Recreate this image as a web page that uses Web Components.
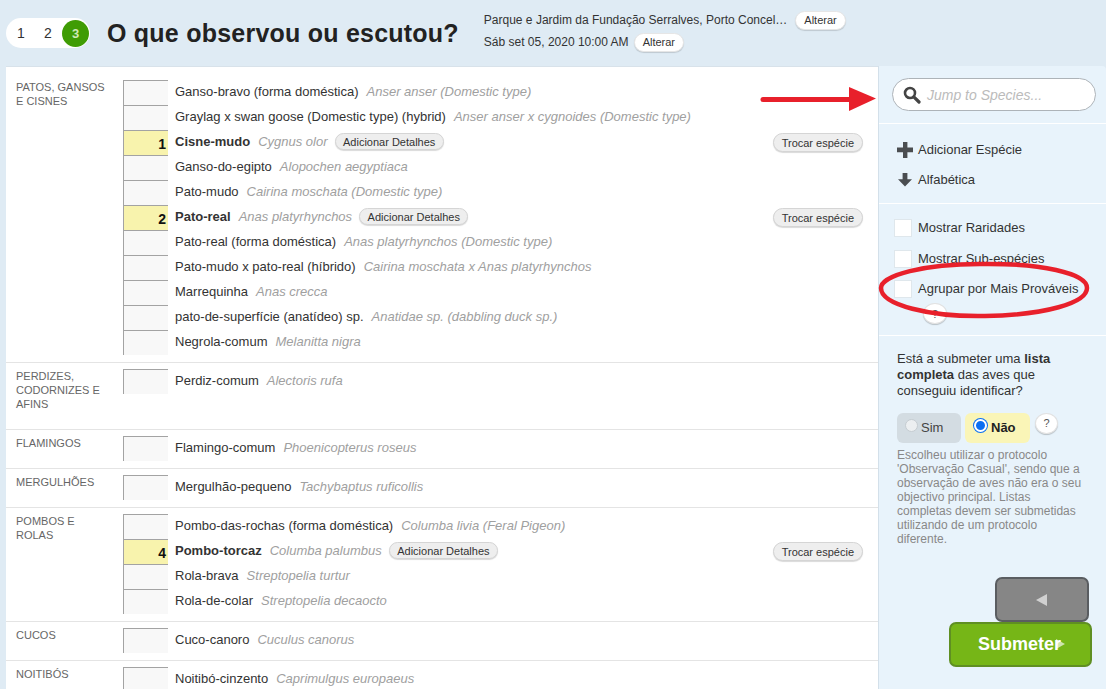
<!DOCTYPE html>
<html lang="pt">
<head>
<meta charset="utf-8">
<title>O que observou ou escutou?</title>
<style>
  html, body { margin: 0; height: 689px; overflow: hidden; }
  body { position: relative; background: #dfebf4; font-family: "Liberation Sans", Arial, sans-serif; color: #333; }
</style>
</head>
<body>
<checklist-page>
  <checklist-header slot="header"></checklist-header>
  <div slot="main">
    <species-group label="Patos, gansos e cisnes" first>
      <species-row name="Ganso-bravo (forma doméstica)" sci="Anser anser (Domestic type)"></species-row>
      <species-row name="Graylag x swan goose (Domestic type) (hybrid)" sci="Anser anser x cygnoides (Domestic type)"></species-row>
      <species-row name="Cisne-mudo" sci="Cygnus olor" count="1"></species-row>
      <species-row name="Ganso-do-egipto" sci="Alopochen aegyptiaca"></species-row>
      <species-row name="Pato-mudo" sci="Cairina moschata (Domestic type)"></species-row>
      <species-row name="Pato-real" sci="Anas platyrhynchos" count="2"></species-row>
      <species-row name="Pato-real (forma doméstica)" sci="Anas platyrhynchos (Domestic type)"></species-row>
      <species-row name="Pato-mudo x pato-real (híbrido)" sci="Cairina moschata x Anas platyrhynchos"></species-row>
      <species-row name="Marrequinha" sci="Anas crecca"></species-row>
      <species-row name="pato-de-superfície (anatídeo) sp." sci="Anatidae sp. (dabbling duck sp.)"></species-row>
      <species-row name="Negrola-comum" sci="Melanitta nigra"></species-row>
    </species-group>
    <species-group label="Perdizes, codornizes e afins">
      <species-row name="Perdiz-comum" sci="Alectoris rufa"></species-row>
    </species-group>
    <species-group label="Flamingos">
      <species-row name="Flamingo-comum" sci="Phoenicopterus roseus"></species-row>
    </species-group>
    <species-group label="Mergulhões">
      <species-row name="Mergulhão-pequeno" sci="Tachybaptus ruficollis"></species-row>
    </species-group>
    <species-group label="Pombos e rolas">
      <species-row name="Pombo-das-rochas (forma doméstica)" sci="Columba livia (Feral Pigeon)"></species-row>
      <species-row name="Pombo-torcaz" sci="Columba palumbus" count="4"></species-row>
      <species-row name="Rola-brava" sci="Streptopelia turtur"></species-row>
      <species-row name="Rola-de-colar" sci="Streptopelia decaocto"></species-row>
    </species-group>
    <species-group label="Cucos">
      <species-row name="Cuco-canoro" sci="Cuculus canorus"></species-row>
    </species-group>
    <species-group label="Noitibós">
      <species-row name="Noitibó-cinzento" sci="Caprimulgus europaeus"></species-row>
    </species-group>
  </div>
  <checklist-sidebar slot="side"></checklist-sidebar>
</checklist-page>
<red-marks></red-marks>

<script>
class ChecklistPage extends HTMLElement {
  constructor() {
    super();
    this.attachShadow({ mode: 'open' });
    this.shadowRoot.innerHTML = `
      <style>
        :host { display: block; height: 689px; overflow: hidden; }
        .body { display: grid; grid-template-columns: 872px 1fr; margin-left: 6px; height: 623px; }
        .main { background: #fff; border-top: 1px solid #d8e2ea; overflow: hidden; }
        .side { border-left: 1px solid #d3e0ea; overflow: hidden; border-top-right-radius: 4px; }
      </style>
      <slot name="header"></slot>
      <div class="body">
        <div class="main"><slot name="main"></slot></div>
        <div class="side"><slot name="side"></slot></div>
      </div>
    `;
  }
}

class PillButton extends HTMLElement {
  constructor() {
    super();
    this.attachShadow({ mode: 'open' });
    this.shadowRoot.innerHTML = `
      <style>
        :host {
          display: inline-flex;
          align-items: center;
          justify-content: center;
          box-sizing: border-box;
          height: 19px;
          padding: 0 8px;
          border-radius: 10px;
          font-size: 11px;
          color: #333;
          background: var(--pill-bg, #eee);
          border: 1px solid var(--pill-border, #d5d5d5);
          box-shadow: 0 1px 1px rgba(0, 0, 0, .15);
          white-space: nowrap;
        }
      </style>
      <slot></slot>
    `;
  }
}

class ChecklistHeader extends HTMLElement {
  constructor() {
    super();
    this.attachShadow({ mode: 'open' });
    this.shadowRoot.innerHTML = `
      <style>
        :host { display: flex; align-items: center; height: 66px; padding-left: 6px; box-sizing: border-box; }
        .steps {
          display: flex;
          align-items: center;
          flex: none;
          width: 84px;
          height: 30px;
          border-radius: 15px;
          background: #fff;
          font-size: 14px;
          color: #333;
          box-sizing: border-box;
          padding: 0 1px 0 5px;
        }
        .steps span { width: 20px; flex: none; text-align: center; }
        .steps span + span { margin-left: 7px; }
        .steps .now {
          flex: none;
          width: 27px;
          height: 27px;
          margin-left: auto;
          border-radius: 50%;
          background: #3f9c04;
          color: #cfe9b5;
          font-size: 13px;
          font-weight: bold;
          display: flex;
          align-items: center;
          justify-content: center;
        }
        h1 { margin: 0 0 0 17px; font-size: 25px; font-weight: bold; color: #222; letter-spacing: .23px; white-space: nowrap; }
        .info { margin: -4px 0 0 25px; font-size: 12px; color: #333; display: flex; flex-direction: column; gap: 3px; }
        .line { display: flex; align-items: center; height: 19px; white-space: nowrap; }
        pill-button { --pill-bg: #fff; --pill-border: #e6e6e6; margin-left: 8px; }
        .line + .line pill-button { margin-left: 5px; }
      </style>
      <div class="steps"><span>1</span><span>2</span><b class="now">3</b></div>
      <h1>O que observou ou escutou?</h1>
      <div class="info">
        <div class="line">Parque e Jardim da Fundação Serralves, Porto Concel… <pill-button>Alterar</pill-button></div>
        <div class="line">Sáb set 05, 2020 10:00 AM <pill-button>Alterar</pill-button></div>
      </div>
    `;
  }
}

class SpeciesGroup extends HTMLElement {
  constructor() {
    super();
    this.attachShadow({ mode: 'open' });
  }

  connectedCallback() {
    const label = this.getAttribute('label') || '';
    const first = this.hasAttribute('first');
    this.shadowRoot.innerHTML = `
      <style>
        :host {
          display: grid;
          grid-template-columns: 107px 1fr;
          padding: ${first ? '13px' : '6px'} 15px 7px 10px;
          border-top: ${first ? '0' : '1px solid #e4e4e4'};
        }
        .label {
          font-size: 11px;
          line-height: 14px;
          color: #666;
          text-transform: uppercase;
          width: 96px;
          padding-bottom: 11px;
        }
      </style>
      <div class="label">${label}</div>
      <div class="rows"><slot></slot></div>
    `;
  }
}

class SpeciesRow extends HTMLElement {
  constructor() {
    super();
    this.attachShadow({ mode: 'open' });
  }

  connectedCallback() {
    const name = this.getAttribute('name') || '';
    const sci = this.getAttribute('sci') || '';
    const count = this.getAttribute('count');
    this.shadowRoot.innerHTML = `
      <style>
        :host { display: flex; align-items: center; height: 25px; font-size: 13px; }
        .count {
          box-sizing: border-box;
          flex: none;
          width: 45px;
          height: 25px;
          margin-right: 7px;
          border-left: 1px solid #a3a3a3;
          border-top: 1px solid #a3a3a3;
          background: ${count ? '#f8f3ad' : '#f8f8f8'};
          color: #111;
          font-weight: bold;
          font-size: 14px;
          line-height: 27px;
          text-align: right;
          padding-right: 2px;
        }
        .name { color: #333; font-weight: ${count ? 'bold' : 'normal'}; white-space: nowrap; margin-bottom: 2px; }
        i { color: #a0a0a0; margin: 0 0 2px 8px; white-space: nowrap; }
        .details { margin: 0 0 2px 7px; height: 17px; padding: 0 7.5px; }
        .swap { margin-left: auto; }
      </style>
      <div class="count">${count || ''}</div>
      <span class="name">${name}</span>
      <i>${sci}</i>
      ${count ? '<pill-button class="details">Adicionar Detalhes</pill-button><pill-button class="swap">Trocar espécie</pill-button>' : ''}
    `;
  }
}

class CheckOption extends HTMLElement {
  constructor() {
    super();
    this.attachShadow({ mode: 'open' });
    this.shadowRoot.innerHTML = `
      <style>
        :host { display: flex; align-items: center; gap: 6px; height: 18px; font-size: 13px; color: #333; white-space: nowrap; }
        .box { box-sizing: border-box; width: 18px; height: 18px; background: #fff; border: 1px solid #dfe7ec; }
        .text { margin-bottom: 2px; }
      </style>
      <div class="box"></div>
      <span class="text"><slot></slot></span>
    `;
  }
}

class HelpBubble extends HTMLElement {
  constructor() {
    super();
    this.attachShadow({ mode: 'open' });
    this.shadowRoot.innerHTML = `
      <style>
        :host {
          display: inline-flex;
          align-items: center;
          justify-content: center;
          box-sizing: border-box;
          width: 24px;
          height: 21px;
          border-radius: 50%;
          background: #fff;
          border: 1px solid #e2e2e2;
          box-shadow: 0 1px 1px rgba(0, 0, 0, .2);
          font-size: 11px;
          color: #555;
        }
      </style>
      ?
    `;
  }
}

class ChecklistSidebar extends HTMLElement {
  constructor() {
    super();
    this.attachShadow({ mode: 'open' });
    this.shadowRoot.innerHTML = `
      <style>
        :host { display: block; height: 623px; background: #e8f3fb; font-size: 13px; color: #333; position: relative; }
        section { border-bottom: 1px solid #fff; box-sizing: border-box; }
        .search { height: 58px; padding: 12px 10px 0 13px; }
        .field {
          display: flex;
          align-items: center;
          gap: 6px;
          height: 33px;
          box-sizing: border-box;
          padding-left: 10px;
          background: #fff;
          border: 1px solid #adb3b8;
          border-radius: 17px;
          color: #bbb;
          font-size: 14px;
          font-style: italic;
        }
        .menu { height: 80px; padding: 16px 0 0 18px; display: flex; flex-direction: column; gap: 12px; }
        .menu div { display: flex; align-items: center; gap: 5px; height: 18px; }
        .menu svg { width: 16px; height: 16px; flex: none; margin-top: 2px; }
        .checks { height: 132px; padding: 15px 0 0 15px; }
        check-option + check-option { margin-top: 13px; }
        check-option + check-option + check-option { margin-top: 12px; }
        .checks help-bubble { margin: 5px 0 0 29px; display: flex; }
        .list { padding: 15px 14px 0 18px; }
        .list p { margin: 0; font-size: 13px; line-height: 16px; width: 190px; }
        .choices { display: flex; align-items: flex-start; gap: 4px; margin-top: 13.5px; }
        .choice {
          display: flex;
          align-items: center;
          gap: 3px;
          height: 30px;
          border-radius: 6px;
          box-sizing: border-box;
          padding-left: 8px;
          font-size: 13px;
        }
        .sim { width: 64px; background: #d3dce2; color: #444; }
        .nao { width: 65px; background: #faf5b7; color: #222; font-weight: bold; gap: 2px; }
        .radio { box-sizing: border-box; width: 13px; height: 13px; border-radius: 50%; flex: none; margin-top: -4px; }
        .sim .radio { background: #eceff1; border: 1px solid #c5ccd1; }
        .nao .radio { background: #0a6ff2; border: 2px solid #fff; box-shadow: 0 0 0 1px #0a6ff2; margin-left: 1px; margin-right: 2px; }
        .choices help-bubble { width: 23px; height: 21px; margin-left: 1px; }
        .list p.note { margin: 5px 0 0; font-size: 12px; line-height: 14px; color: #888; width: 188px; }
        .actions { position: absolute; right: 14px; top: 511px; display: flex; flex-direction: column; align-items: flex-end; }
        .back, .submit { box-sizing: border-box; display: flex; align-items: center; justify-content: center; border-radius: 7px; }
        .back { width: 94px; height: 45px; margin-right: 3px; background: #868686; border: 2px solid #5a5d61; padding-left: 0; }
        .back::before { content: ""; border: 6px solid transparent; border-left: 0; border-right: 11px solid #d0d0d0; margin-left: -2px; }
        .submit { position: relative; width: 143px; height: 45px; background: #76b617; border: 2px solid #5f8f22; color: #fff; font-size: 18px; font-weight: bold; padding-right: 2px; }
        .submit::after { content: ""; position: absolute; left: 105px; top: 15px; border: 5px solid transparent; border-right: 0; border-left: 9px solid rgba(255, 255, 255, .65); }
      </style>
      <section class="search">
        <div class="field">
          <svg width="18" height="18" viewBox="0 0 18 18"><circle cx="7" cy="7" r="5" fill="none" stroke="#444" stroke-width="2.6"/><path d="M10.8 10.8 16 16" stroke="#444" stroke-width="3.2" stroke-linecap="round"/></svg>
          Jump to Species...
        </div>
      </section>
      <section class="menu">
        <div><svg viewBox="0 0 16 16"><path d="M6 0h4.4v5.6H16v4.6h-5.6V16H6v-5.8H0V5.6h6z" fill="#4a4d50"/></svg>Adicionar Espécie</div>
        <div><svg viewBox="0 0 16 16"><path d="M5.6 1h4.8v6.2H15L8 14.5 1 7.2h4.6z" fill="#4a4d50"/></svg>Alfabética</div>
      </section>
      <section class="checks">
        <check-option>Mostrar Raridades</check-option>
        <check-option>Mostrar Sub-espécies</check-option>
        <check-option>Agrupar por Mais Prováveis</check-option>
        <help-bubble></help-bubble>
      </section>
      <div class="list">
        <p>Está a submeter uma <b>lista completa</b> das aves que conseguiu identificar?</p>
        <div class="choices">
          <div class="choice sim"><span class="radio"></span>Sim</div>
          <div class="choice nao"><span class="radio"></span>Não</div>
          <help-bubble></help-bubble>
        </div>
        <p class="note">Escolheu utilizar o protocolo 'Observação Casual', sendo que a observação de aves não era o seu objectivo principal. Listas completas devem ser submetidas utilizando de um protocolo diferente.</p>
      </div>
      <div class="actions">
        <div class="back"></div>
        <div class="submit">Submeter</div>
      </div>
    `;
  }
}

// seta e círculo vermelhos por cima do ecrã
class RedMarks extends HTMLElement {
  constructor() {
    super();
    this.attachShadow({ mode: 'open' });
    this.shadowRoot.innerHTML = `
      <style>
        :host { position: absolute; left: 0; top: 0; width: 1106px; height: 689px; pointer-events: none; }
      </style>
      <svg width="1106" height="689" viewBox="0 0 1106 689">
        <path d="M763 99.5H852" stroke="#e8202b" stroke-width="5" stroke-linecap="round" fill="none"/>
        <path d="M849 87 876 98.5 849 111z" fill="#e8202b"/>
        <path d="M980 264C925 264 881 275 881 288 881 305 930 317 985 316 1045 315 1087 303 1087 288 1087 273 1040 263 980 264Z" fill="none" stroke="#e8202b" stroke-width="4.5"/>
      </svg>
    `;
  }
}

customElements.define('pill-button', PillButton);
customElements.define('help-bubble', HelpBubble);
customElements.define('check-option', CheckOption);
customElements.define('species-row', SpeciesRow);
customElements.define('species-group', SpeciesGroup);
customElements.define('checklist-header', ChecklistHeader);
customElements.define('checklist-sidebar', ChecklistSidebar);
customElements.define('checklist-page', ChecklistPage);
customElements.define('red-marks', RedMarks);
</script>
</body>
</html>
